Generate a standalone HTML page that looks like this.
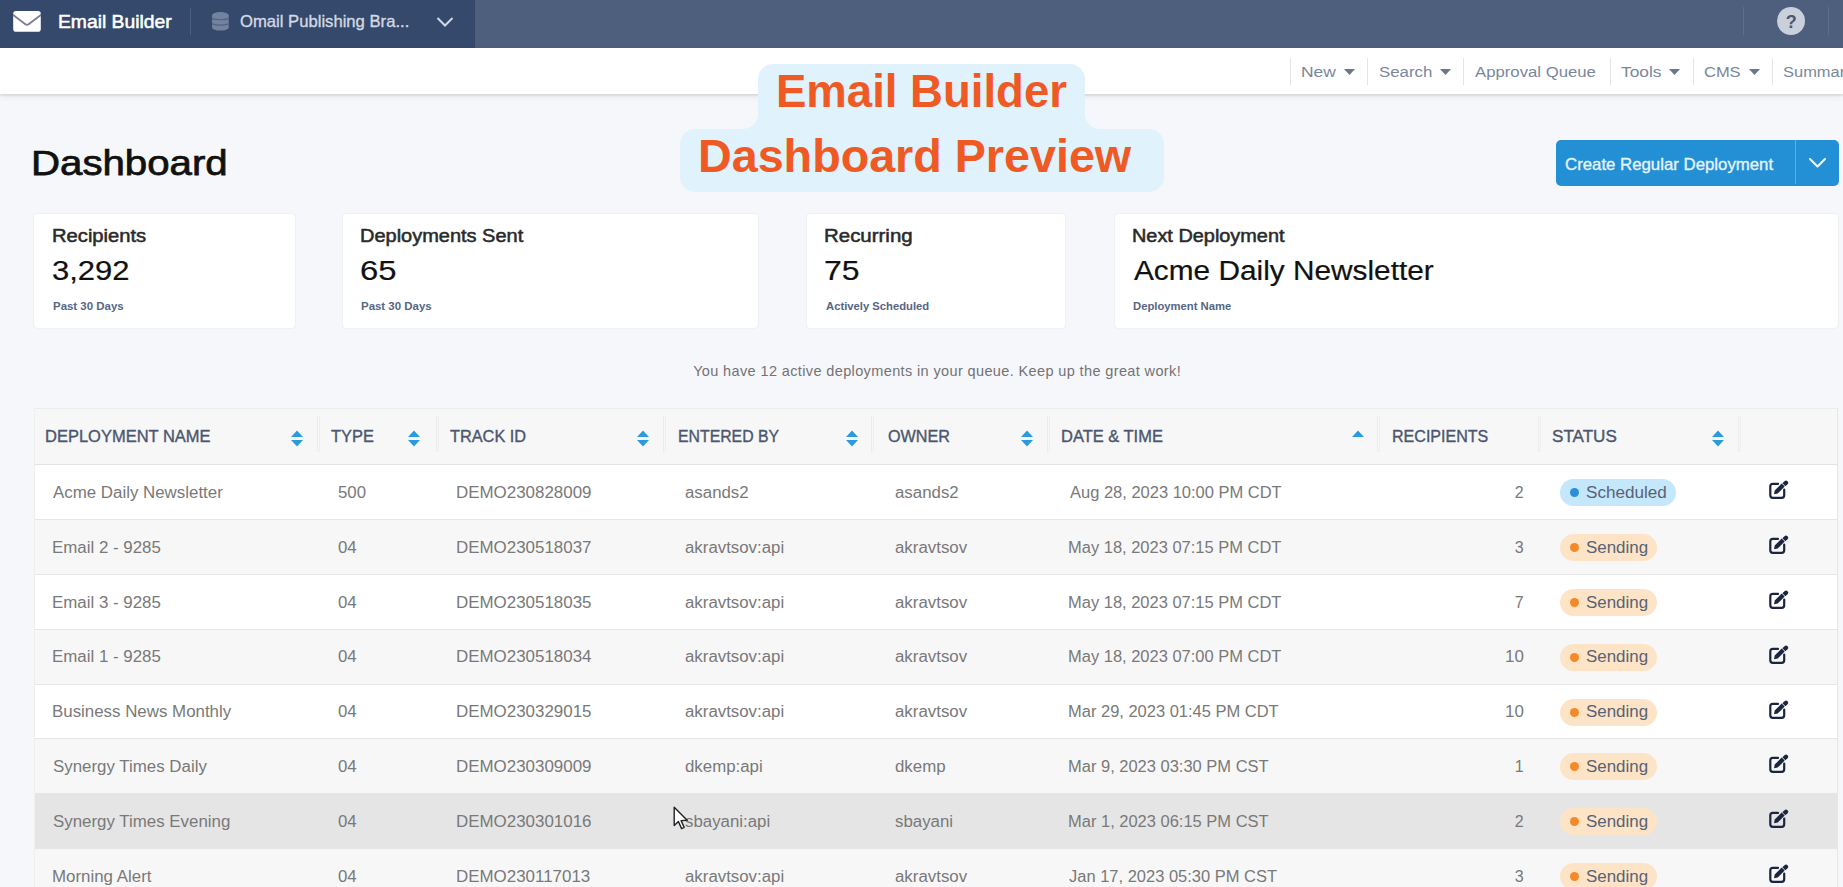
<!DOCTYPE html>
<html><head><meta charset="utf-8"><style>
html,body{margin:0;padding:0;}
body{width:1843px;height:887px;overflow:hidden;position:relative;background:#f6f7fb;font-family:"Liberation Sans",sans-serif;}
.r{position:absolute;}
.t{position:absolute;white-space:nowrap;}
.card{background:#fff;border-radius:3px;box-shadow:0 0 1.5px rgba(0,0,0,0.13);}
</style></head><body>
<div class="r" style="left:0px;top:0px;width:1843px;height:48px;background:#4d5f7c;"></div>
<div class="r" style="left:0px;top:0px;width:475px;height:48px;background:#34496b;"></div>
<svg class="r" style="left:12.5px;top:11px" width="28" height="21" viewBox="0 0 28 21"><rect x="0.2" y="0.1" width="27.6" height="20.6" rx="2.8" fill="#fff"/><path d="M-0.6 3.4 L12.4 13.3 Q14 14.5 15.6 13.3 L28.6 3.4" stroke="#7b7e90" stroke-width="1.9" fill="none" stroke-linejoin="round"/></svg>
<div class="t" style="left:57.96px;top:12.21px;font-size:19px;line-height:19px;color:#ffffff;transform:scaleX(1.0154);transform-origin:0 0;-webkit-text-stroke:0.55px #ffffff;">Email Builder</div>
<div class="r" style="left:190px;top:8px;width:1px;height:27px;background:#4b5f80;"></div>
<svg class="r" style="left:211.5px;top:12px" width="17" height="19" viewBox="0 0 17 19"><g fill="#72839f"><ellipse cx="8.4" cy="3.3" rx="8.3" ry="3.2"/><rect x="0.1" y="3.3" width="16.6" height="12.3"/><ellipse cx="8.4" cy="15.6" rx="8.3" ry="3"/></g><path d="M0 6.6 Q8.4 8.9 16.8 6.6 M0 11.9 Q8.4 14.3 16.8 11.9" stroke="#52627f" stroke-width="1.1" fill="none"/></svg>
<div class="t" style="left:239.75px;top:13.01px;font-size:17px;line-height:17px;color:#d3d9e3;transform:scaleX(0.9789);transform-origin:0 0;-webkit-text-stroke:0.35px #d3d9e3;">Omail Publishing Bra...</div>
<svg class="r" style="left:436px;top:16px" width="18" height="12" viewBox="0 0 18 12"><path d="M1.5 2 L9 9.5 L16.5 2" stroke="#d3d9e3" stroke-width="2" fill="none"/></svg>
<div class="r" style="left:1743px;top:7px;width:1px;height:28px;background:#5d6f8c;"></div>
<div class="r" style="left:1828px;top:7px;width:1px;height:28px;background:#5d6f8c;"></div>
<div class="r" style="left:1777px;top:7px;width:28px;height:28px;border-radius:50%;background:#c9d0dc"></div>
<div class="t" style="left:1785.69px;top:12.96px;font-size:18px;line-height:18px;color:#4b586f;font-weight:700;">?</div>
<div class="r" style="left:0px;top:48px;width:1843px;height:46px;background:#ffffff;box-shadow:0 2px 1.5px rgba(0,0,0,0.07),0 3px 7px rgba(0,0,0,0.06);"></div>
<div class="r" style="left:1290px;top:58px;width:1px;height:27px;background:#e3e5e9;"></div>
<div class="r" style="left:1367px;top:58px;width:1px;height:27px;background:#e3e5e9;"></div>
<div class="r" style="left:1463px;top:58px;width:1px;height:27px;background:#e3e5e9;"></div>
<div class="r" style="left:1610px;top:58px;width:1px;height:27px;background:#e3e5e9;"></div>
<div class="r" style="left:1693px;top:58px;width:1px;height:27px;background:#e3e5e9;"></div>
<div class="r" style="left:1772px;top:58px;width:1px;height:27px;background:#e3e5e9;"></div>
<div class="t" style="left:1300.61px;top:63.88px;font-size:15.5px;line-height:15.5px;color:#7a879b;transform:scaleX(1.1227);transform-origin:0 0;">New</div>
<div class="t" style="left:1378.74px;top:63.88px;font-size:15.5px;line-height:15.5px;color:#7a879b;transform:scaleX(1.0876);transform-origin:0 0;">Search</div>
<div class="t" style="left:1474.92px;top:63.88px;font-size:15.5px;line-height:15.5px;color:#7a879b;transform:scaleX(1.0790);transform-origin:0 0;">Approval Queue</div>
<div class="t" style="left:1621.05px;top:63.88px;font-size:15.5px;line-height:15.5px;color:#7a879b;transform:scaleX(1.1205);transform-origin:0 0;">Tools</div>
<div class="t" style="left:1704.18px;top:63.88px;font-size:15.5px;line-height:15.5px;color:#7a879b;transform:scaleX(1.0626);transform-origin:0 0;">CMS</div>
<div class="t" style="left:1783.26px;top:63.88px;font-size:15.5px;line-height:15.5px;color:#7a879b;transform:scaleX(1.0619);transform-origin:0 0;">Summary</div>
<svg class="r" style="left:1344px;top:69px" width="11" height="6" viewBox="0 0 11 6"><path d="M0 0 H11 L5.5 6Z" fill="#6b778c"/></svg>
<svg class="r" style="left:1439.6px;top:69px" width="11" height="6" viewBox="0 0 11 6"><path d="M0 0 H11 L5.5 6Z" fill="#6b778c"/></svg>
<svg class="r" style="left:1669px;top:69px" width="11" height="6" viewBox="0 0 11 6"><path d="M0 0 H11 L5.5 6Z" fill="#6b778c"/></svg>
<svg class="r" style="left:1748.6px;top:69px" width="11" height="6" viewBox="0 0 11 6"><path d="M0 0 H11 L5.5 6Z" fill="#6b778c"/></svg>
<div class="t" style="left:31.48px;top:146.14px;font-size:35.5px;line-height:35.5px;color:#111111;transform:scaleX(1.1327);transform-origin:0 0;-webkit-text-stroke:0.75px #111111;">Dashboard</div>
<div class="r" style="left:1556px;top:140px;width:283px;height:46px;border-radius:5px;background:#2390d6"></div>
<div class="r" style="left:1795px;top:140px;width:1px;height:44px;background:#56b1ef;"></div>
<div class="t" style="left:1565.16px;top:156.31px;font-size:17px;line-height:17px;color:#e6f3fd;transform:scaleX(0.9877);transform-origin:0 0;-webkit-text-stroke:0.35px #e6f3fd;">Create Regular Deployment</div>
<svg class="r" style="left:1808px;top:157px" width="19" height="12" viewBox="0 0 19 12"><path d="M2 2 L9.5 9.5 L17 2" stroke="#eaf6ff" stroke-width="2.1" stroke-linecap="round" stroke-linejoin="round" fill="none"/></svg>
<div class="r card" style="left:34px;top:214px;width:261px;height:114px"></div>
<div class="t" style="left:51.99px;top:227.98px;font-size:17.5px;line-height:17.5px;color:#2a2a2a;transform:scaleX(1.1529);transform-origin:0 0;-webkit-text-stroke:0.5px #2a2a2a;">Recipients</div>
<div class="t" style="left:52.36px;top:258.24px;font-size:27px;line-height:27px;color:#111111;transform:scaleX(1.1480);transform-origin:0 0;-webkit-text-stroke:0.2px #111111;">3,292</div>
<div class="t" style="left:52.86px;top:301.12px;font-size:11.2px;line-height:11.2px;color:#566685;font-weight:700;transform:scaleX(1.0231);transform-origin:0 0;">Past 30 Days</div>
<div class="r card" style="left:343px;top:214px;width:415px;height:114px"></div>
<div class="t" style="left:360.20px;top:227.98px;font-size:17.5px;line-height:17.5px;color:#2a2a2a;transform:scaleX(1.1414);transform-origin:0 0;-webkit-text-stroke:0.5px #2a2a2a;">Deployments Sent</div>
<div class="t" style="left:360.16px;top:258.24px;font-size:27px;line-height:27px;color:#111111;transform:scaleX(1.2164);transform-origin:0 0;-webkit-text-stroke:0.2px #111111;">65</div>
<div class="t" style="left:361.06px;top:301.12px;font-size:11.2px;line-height:11.2px;color:#566685;font-weight:700;transform:scaleX(1.0231);transform-origin:0 0;">Past 30 Days</div>
<div class="r card" style="left:807px;top:214px;width:258px;height:114px"></div>
<div class="t" style="left:824.16px;top:227.98px;font-size:17.5px;line-height:17.5px;color:#2a2a2a;transform:scaleX(1.1688);transform-origin:0 0;-webkit-text-stroke:0.5px #2a2a2a;">Recurring</div>
<div class="t" style="left:824.20px;top:258.24px;font-size:27px;line-height:27px;color:#111111;transform:scaleX(1.1837);transform-origin:0 0;-webkit-text-stroke:0.2px #111111;">75</div>
<div class="t" style="left:825.52px;top:301.12px;font-size:11.2px;line-height:11.2px;color:#566685;font-weight:700;transform:scaleX(1.0059);transform-origin:0 0;">Actively Scheduled</div>
<div class="r card" style="left:1115px;top:214px;width:723px;height:114px"></div>
<div class="t" style="left:1132.21px;top:227.98px;font-size:17.5px;line-height:17.5px;color:#2a2a2a;transform:scaleX(1.1361);transform-origin:0 0;-webkit-text-stroke:0.5px #2a2a2a;">Next Deployment</div>
<div class="t" style="left:1133.65px;top:258.24px;font-size:27px;line-height:27px;color:#111111;transform:scaleX(1.1035);transform-origin:0 0;-webkit-text-stroke:0.2px #111111;">Acme Daily Newsletter</div>
<div class="t" style="left:1133.07px;top:301.12px;font-size:11.2px;line-height:11.2px;color:#566685;font-weight:700;transform:scaleX(1.0072);transform-origin:0 0;">Deployment Name</div>
<div class="t" style="left:693.14px;top:363.92px;font-size:14.5px;line-height:14.5px;color:#737373;letter-spacing:0.374px;">You have 12 active deployments in your queue. Keep up the great work!</div>
<div class="r" style="left:34px;top:408px;width:1804px;height:56px;background:#f7f7f7;border-top:1px solid #ececec;box-sizing:border-box"></div>
<div class="r" style="left:34px;top:464px;width:1804px;height:1px;background:#e3e3e3;"></div>
<div class="t" style="left:44.98px;top:429.25px;font-size:16px;line-height:16px;color:#4a5670;transform:scaleX(1.0306);transform-origin:0 0;-webkit-text-stroke:0.35px #4a5670;">DEPLOYMENT NAME</div>
<div class="t" style="left:331.17px;top:429.25px;font-size:16px;line-height:16px;color:#4a5670;transform:scaleX(1.0245);transform-origin:0 0;-webkit-text-stroke:0.35px #4a5670;">TYPE</div>
<div class="t" style="left:450.47px;top:429.25px;font-size:16px;line-height:16px;color:#4a5670;transform:scaleX(1.0190);transform-origin:0 0;-webkit-text-stroke:0.35px #4a5670;">TRACK ID</div>
<div class="t" style="left:678.23px;top:429.25px;font-size:16px;line-height:16px;color:#4a5670;transform:scaleX(0.9887);transform-origin:0 0;-webkit-text-stroke:0.35px #4a5670;">ENTERED BY</div>
<div class="t" style="left:887.67px;top:429.25px;font-size:16px;line-height:16px;color:#4a5670;transform:scaleX(1.0110);transform-origin:0 0;-webkit-text-stroke:0.35px #4a5670;">OWNER</div>
<div class="t" style="left:1061.08px;top:429.25px;font-size:16px;line-height:16px;color:#4a5670;transform:scaleX(1.0295);transform-origin:0 0;-webkit-text-stroke:0.35px #4a5670;">DATE &amp; TIME</div>
<div class="t" style="left:1392.42px;top:429.25px;font-size:16px;line-height:16px;color:#4a5670;transform:scaleX(1.0032);transform-origin:0 0;-webkit-text-stroke:0.35px #4a5670;">RECIPIENTS</div>
<div class="t" style="left:1552.03px;top:429.25px;font-size:16px;line-height:16px;color:#4a5670;transform:scaleX(1.0661);transform-origin:0 0;-webkit-text-stroke:0.35px #4a5670;">STATUS</div>
<div class="r" style="left:317px;top:416px;width:1px;height:36px;background:#ececec;"></div>
<div class="r" style="left:319px;top:416px;width:1px;height:36px;background:#efefef;"></div>
<div class="r" style="left:436px;top:416px;width:1px;height:36px;background:#ececec;"></div>
<div class="r" style="left:438px;top:416px;width:1px;height:36px;background:#efefef;"></div>
<div class="r" style="left:663px;top:416px;width:1px;height:36px;background:#ececec;"></div>
<div class="r" style="left:665px;top:416px;width:1px;height:36px;background:#efefef;"></div>
<div class="r" style="left:871px;top:416px;width:1px;height:36px;background:#ececec;"></div>
<div class="r" style="left:873px;top:416px;width:1px;height:36px;background:#efefef;"></div>
<div class="r" style="left:1047px;top:416px;width:1px;height:36px;background:#ececec;"></div>
<div class="r" style="left:1049px;top:416px;width:1px;height:36px;background:#efefef;"></div>
<div class="r" style="left:1377px;top:416px;width:1px;height:36px;background:#ececec;"></div>
<div class="r" style="left:1379px;top:416px;width:1px;height:36px;background:#efefef;"></div>
<div class="r" style="left:1538px;top:416px;width:1px;height:36px;background:#ececec;"></div>
<div class="r" style="left:1540px;top:416px;width:1px;height:36px;background:#efefef;"></div>
<div class="r" style="left:1738px;top:416px;width:1px;height:36px;background:#ececec;"></div>
<div class="r" style="left:1740px;top:416px;width:1px;height:36px;background:#efefef;"></div>
<svg class="r" style="left:290.5px;top:430px" width="12" height="17" viewBox="0 0 12 17"><path d="M0 7 L6 0.5 L12 7Z" fill="#2b9be0"/><path d="M0 10 L6 16.5 L12 10Z" fill="#2b9be0"/></svg>
<svg class="r" style="left:408px;top:430px" width="12" height="17" viewBox="0 0 12 17"><path d="M0 7 L6 0.5 L12 7Z" fill="#2b9be0"/><path d="M0 10 L6 16.5 L12 10Z" fill="#2b9be0"/></svg>
<svg class="r" style="left:636.5px;top:430px" width="12" height="17" viewBox="0 0 12 17"><path d="M0 7 L6 0.5 L12 7Z" fill="#2b9be0"/><path d="M0 10 L6 16.5 L12 10Z" fill="#2b9be0"/></svg>
<svg class="r" style="left:846px;top:430px" width="12" height="17" viewBox="0 0 12 17"><path d="M0 7 L6 0.5 L12 7Z" fill="#2b9be0"/><path d="M0 10 L6 16.5 L12 10Z" fill="#2b9be0"/></svg>
<svg class="r" style="left:1021px;top:430px" width="12" height="17" viewBox="0 0 12 17"><path d="M0 7 L6 0.5 L12 7Z" fill="#2b9be0"/><path d="M0 10 L6 16.5 L12 10Z" fill="#2b9be0"/></svg>
<svg class="r" style="left:1712px;top:430px" width="12" height="17" viewBox="0 0 12 17"><path d="M0 7 L6 0.5 L12 7Z" fill="#2b9be0"/><path d="M0 10 L6 16.5 L12 10Z" fill="#2b9be0"/></svg>
<svg class="r" style="left:1352px;top:430px" width="12" height="17" viewBox="0 0 12 17"><path d="M0 7 L6 0.5 L12 7Z" fill="#2b9be0"/></svg>
<div class="r" style="left:34px;top:465px;width:1804px;height:54px;background:#ffffff;"></div>
<div class="r" style="left:34px;top:519px;width:1804px;height:1px;background:#e6e6e6;"></div>
<div class="t" style="left:53.32px;top:484.85px;font-size:16px;line-height:16px;color:#797979;transform:scaleX(1.0550);transform-origin:0 0;">Acme Daily Newsletter</div>
<div class="t" style="left:338.03px;top:484.85px;font-size:16px;line-height:16px;color:#797979;transform:scaleX(1.0500);transform-origin:0 0;">500</div>
<div class="t" style="left:455.55px;top:484.85px;font-size:16px;line-height:16px;color:#797979;transform:scaleX(1.0580);transform-origin:0 0;">DEMO230828009</div>
<div class="t" style="left:685.04px;top:484.85px;font-size:16px;line-height:16px;color:#797979;transform:scaleX(1.0520);transform-origin:0 0;">asands2</div>
<div class="t" style="left:894.74px;top:484.85px;font-size:16px;line-height:16px;color:#797979;transform:scaleX(1.0530);transform-origin:0 0;">asands2</div>
<div class="t" style="left:1069.52px;top:484.85px;font-size:16px;line-height:16px;color:#797979;transform:scaleX(1.0300);transform-origin:0 0;">Aug 28, 2023 10:00 PM CDT</div>
<div class="t" style="left:1514.72px;top:484.85px;font-size:16px;line-height:16px;color:#797979;">2</div>
<div class="r" style="left:1560px;top:479px;width:116px;height:27px;border-radius:14px;background:#c5e7fb"></div>
<div class="r" style="left:1569.5px;top:487.5px;width:9px;height:9px;border-radius:50%;background:#2a8fd8"></div>
<div class="t" style="left:1585.73px;top:484.85px;font-size:16px;line-height:16px;color:#586275;transform:scaleX(1.0672);transform-origin:0 0;">Scheduled</div>
<svg class="r" style="left:1768px;top:480.0px" width="21" height="20" viewBox="0 0 21 20"><path d="M10 3.9 H4.8 A2.5 2.5 0 0 0 2.3 6.4 V15.3 A2.5 2.5 0 0 0 4.8 17.8 H13.7 A2.5 2.5 0 0 0 16.2 15.3 V9.5" stroke="#1b2540" stroke-width="2.2" fill="none" stroke-linecap="round"/><path d="M6 14.3 L6.7 10.6 L13.7 3.6 L16.7 6.6 L9.7 13.6 Z" fill="#1b2540"/><path d="M14.4 3.3 L16.5 1.2 A2.1 2.1 0 0 1 19.5 4.2 L17.4 6.3 Z" fill="#1b2540"/></svg>
<div class="r" style="left:34px;top:520px;width:1804px;height:54px;background:#f7f7f7;"></div>
<div class="r" style="left:34px;top:574px;width:1804px;height:1px;background:#e6e6e6;"></div>
<div class="t" style="left:52.05px;top:539.73px;font-size:16px;line-height:16px;color:#797979;transform:scaleX(1.0550);transform-origin:0 0;">Email 2 - 9285</div>
<div class="t" style="left:338.03px;top:539.73px;font-size:16px;line-height:16px;color:#797979;transform:scaleX(1.0500);transform-origin:0 0;">04</div>
<div class="t" style="left:455.55px;top:539.73px;font-size:16px;line-height:16px;color:#797979;transform:scaleX(1.0580);transform-origin:0 0;">DEMO230518037</div>
<div class="t" style="left:685.04px;top:539.73px;font-size:16px;line-height:16px;color:#797979;transform:scaleX(1.0520);transform-origin:0 0;">akravtsov:api</div>
<div class="t" style="left:894.74px;top:539.73px;font-size:16px;line-height:16px;color:#797979;transform:scaleX(1.0530);transform-origin:0 0;">akravtsov</div>
<div class="t" style="left:1068.28px;top:539.73px;font-size:16px;line-height:16px;color:#797979;transform:scaleX(1.0300);transform-origin:0 0;">May 18, 2023 07:15 PM CDT</div>
<div class="t" style="left:1514.64px;top:539.73px;font-size:16px;line-height:16px;color:#797979;">3</div>
<div class="r" style="left:1560px;top:534px;width:97px;height:27px;border-radius:14px;background:#fde4c6"></div>
<div class="r" style="left:1569.5px;top:542.5px;width:9px;height:9px;border-radius:50%;background:#f5892a"></div>
<div class="t" style="left:1585.74px;top:539.73px;font-size:16px;line-height:16px;color:#586275;transform:scaleX(1.0580);transform-origin:0 0;">Sending</div>
<svg class="r" style="left:1768px;top:534.9px" width="21" height="20" viewBox="0 0 21 20"><path d="M10 3.9 H4.8 A2.5 2.5 0 0 0 2.3 6.4 V15.3 A2.5 2.5 0 0 0 4.8 17.8 H13.7 A2.5 2.5 0 0 0 16.2 15.3 V9.5" stroke="#1b2540" stroke-width="2.2" fill="none" stroke-linecap="round"/><path d="M6 14.3 L6.7 10.6 L13.7 3.6 L16.7 6.6 L9.7 13.6 Z" fill="#1b2540"/><path d="M14.4 3.3 L16.5 1.2 A2.1 2.1 0 0 1 19.5 4.2 L17.4 6.3 Z" fill="#1b2540"/></svg>
<div class="r" style="left:34px;top:575px;width:1804px;height:54px;background:#ffffff;"></div>
<div class="r" style="left:34px;top:629px;width:1804px;height:1px;background:#e6e6e6;"></div>
<div class="t" style="left:52.05px;top:594.61px;font-size:16px;line-height:16px;color:#797979;transform:scaleX(1.0550);transform-origin:0 0;">Email 3 - 9285</div>
<div class="t" style="left:338.03px;top:594.61px;font-size:16px;line-height:16px;color:#797979;transform:scaleX(1.0500);transform-origin:0 0;">04</div>
<div class="t" style="left:455.55px;top:594.61px;font-size:16px;line-height:16px;color:#797979;transform:scaleX(1.0580);transform-origin:0 0;">DEMO230518035</div>
<div class="t" style="left:685.04px;top:594.61px;font-size:16px;line-height:16px;color:#797979;transform:scaleX(1.0520);transform-origin:0 0;">akravtsov:api</div>
<div class="t" style="left:894.74px;top:594.61px;font-size:16px;line-height:16px;color:#797979;transform:scaleX(1.0530);transform-origin:0 0;">akravtsov</div>
<div class="t" style="left:1068.28px;top:594.61px;font-size:16px;line-height:16px;color:#797979;transform:scaleX(1.0300);transform-origin:0 0;">May 18, 2023 07:15 PM CDT</div>
<div class="t" style="left:1514.72px;top:594.61px;font-size:16px;line-height:16px;color:#797979;">7</div>
<div class="r" style="left:1560px;top:589px;width:97px;height:27px;border-radius:14px;background:#fde4c6"></div>
<div class="r" style="left:1569.5px;top:597.5px;width:9px;height:9px;border-radius:50%;background:#f5892a"></div>
<div class="t" style="left:1585.74px;top:594.61px;font-size:16px;line-height:16px;color:#586275;transform:scaleX(1.0580);transform-origin:0 0;">Sending</div>
<svg class="r" style="left:1768px;top:589.8px" width="21" height="20" viewBox="0 0 21 20"><path d="M10 3.9 H4.8 A2.5 2.5 0 0 0 2.3 6.4 V15.3 A2.5 2.5 0 0 0 4.8 17.8 H13.7 A2.5 2.5 0 0 0 16.2 15.3 V9.5" stroke="#1b2540" stroke-width="2.2" fill="none" stroke-linecap="round"/><path d="M6 14.3 L6.7 10.6 L13.7 3.6 L16.7 6.6 L9.7 13.6 Z" fill="#1b2540"/><path d="M14.4 3.3 L16.5 1.2 A2.1 2.1 0 0 1 19.5 4.2 L17.4 6.3 Z" fill="#1b2540"/></svg>
<div class="r" style="left:34px;top:630px;width:1804px;height:54px;background:#f7f7f7;"></div>
<div class="r" style="left:34px;top:684px;width:1804px;height:1px;background:#e6e6e6;"></div>
<div class="t" style="left:52.05px;top:649.49px;font-size:16px;line-height:16px;color:#797979;transform:scaleX(1.0550);transform-origin:0 0;">Email 1 - 9285</div>
<div class="t" style="left:338.03px;top:649.49px;font-size:16px;line-height:16px;color:#797979;transform:scaleX(1.0500);transform-origin:0 0;">04</div>
<div class="t" style="left:455.55px;top:649.49px;font-size:16px;line-height:16px;color:#797979;transform:scaleX(1.0580);transform-origin:0 0;">DEMO230518034</div>
<div class="t" style="left:685.04px;top:649.49px;font-size:16px;line-height:16px;color:#797979;transform:scaleX(1.0520);transform-origin:0 0;">akravtsov:api</div>
<div class="t" style="left:894.74px;top:649.49px;font-size:16px;line-height:16px;color:#797979;transform:scaleX(1.0530);transform-origin:0 0;">akravtsov</div>
<div class="t" style="left:1068.28px;top:649.49px;font-size:16px;line-height:16px;color:#797979;transform:scaleX(1.0300);transform-origin:0 0;">May 18, 2023 07:00 PM CDT</div>
<div class="t" style="left:1504.69px;top:649.49px;font-size:16px;line-height:16px;color:#797979;transform:scaleX(1.0580);transform-origin:0 0;">10</div>
<div class="r" style="left:1560px;top:644px;width:97px;height:27px;border-radius:14px;background:#fde4c6"></div>
<div class="r" style="left:1569.5px;top:652.5px;width:9px;height:9px;border-radius:50%;background:#f5892a"></div>
<div class="t" style="left:1585.74px;top:649.49px;font-size:16px;line-height:16px;color:#586275;transform:scaleX(1.0580);transform-origin:0 0;">Sending</div>
<svg class="r" style="left:1768px;top:644.6px" width="21" height="20" viewBox="0 0 21 20"><path d="M10 3.9 H4.8 A2.5 2.5 0 0 0 2.3 6.4 V15.3 A2.5 2.5 0 0 0 4.8 17.8 H13.7 A2.5 2.5 0 0 0 16.2 15.3 V9.5" stroke="#1b2540" stroke-width="2.2" fill="none" stroke-linecap="round"/><path d="M6 14.3 L6.7 10.6 L13.7 3.6 L16.7 6.6 L9.7 13.6 Z" fill="#1b2540"/><path d="M14.4 3.3 L16.5 1.2 A2.1 2.1 0 0 1 19.5 4.2 L17.4 6.3 Z" fill="#1b2540"/></svg>
<div class="r" style="left:34px;top:685px;width:1804px;height:53px;background:#ffffff;"></div>
<div class="r" style="left:34px;top:738px;width:1804px;height:1px;background:#e6e6e6;"></div>
<div class="t" style="left:52.05px;top:704.37px;font-size:16px;line-height:16px;color:#797979;transform:scaleX(1.0550);transform-origin:0 0;">Business News Monthly</div>
<div class="t" style="left:338.03px;top:704.37px;font-size:16px;line-height:16px;color:#797979;transform:scaleX(1.0500);transform-origin:0 0;">04</div>
<div class="t" style="left:455.55px;top:704.37px;font-size:16px;line-height:16px;color:#797979;transform:scaleX(1.0580);transform-origin:0 0;">DEMO230329015</div>
<div class="t" style="left:685.04px;top:704.37px;font-size:16px;line-height:16px;color:#797979;transform:scaleX(1.0520);transform-origin:0 0;">akravtsov:api</div>
<div class="t" style="left:894.74px;top:704.37px;font-size:16px;line-height:16px;color:#797979;transform:scaleX(1.0530);transform-origin:0 0;">akravtsov</div>
<div class="t" style="left:1068.28px;top:704.37px;font-size:16px;line-height:16px;color:#797979;transform:scaleX(1.0300);transform-origin:0 0;">Mar 29, 2023 01:45 PM CDT</div>
<div class="t" style="left:1504.69px;top:704.37px;font-size:16px;line-height:16px;color:#797979;transform:scaleX(1.0580);transform-origin:0 0;">10</div>
<div class="r" style="left:1560px;top:699px;width:97px;height:27px;border-radius:14px;background:#fde4c6"></div>
<div class="r" style="left:1569.5px;top:707.5px;width:9px;height:9px;border-radius:50%;background:#f5892a"></div>
<div class="t" style="left:1585.74px;top:704.37px;font-size:16px;line-height:16px;color:#586275;transform:scaleX(1.0580);transform-origin:0 0;">Sending</div>
<svg class="r" style="left:1768px;top:699.5px" width="21" height="20" viewBox="0 0 21 20"><path d="M10 3.9 H4.8 A2.5 2.5 0 0 0 2.3 6.4 V15.3 A2.5 2.5 0 0 0 4.8 17.8 H13.7 A2.5 2.5 0 0 0 16.2 15.3 V9.5" stroke="#1b2540" stroke-width="2.2" fill="none" stroke-linecap="round"/><path d="M6 14.3 L6.7 10.6 L13.7 3.6 L16.7 6.6 L9.7 13.6 Z" fill="#1b2540"/><path d="M14.4 3.3 L16.5 1.2 A2.1 2.1 0 0 1 19.5 4.2 L17.4 6.3 Z" fill="#1b2540"/></svg>
<div class="r" style="left:34px;top:739px;width:1804px;height:54px;background:#f7f7f7;"></div>
<div class="r" style="left:34px;top:793px;width:1804px;height:1px;background:#e5e5e5;"></div>
<div class="t" style="left:52.64px;top:759.25px;font-size:16px;line-height:16px;color:#797979;transform:scaleX(1.0550);transform-origin:0 0;">Synergy Times Daily</div>
<div class="t" style="left:338.03px;top:759.25px;font-size:16px;line-height:16px;color:#797979;transform:scaleX(1.0500);transform-origin:0 0;">04</div>
<div class="t" style="left:455.55px;top:759.25px;font-size:16px;line-height:16px;color:#797979;transform:scaleX(1.0580);transform-origin:0 0;">DEMO230309009</div>
<div class="t" style="left:685.13px;top:759.25px;font-size:16px;line-height:16px;color:#797979;transform:scaleX(1.0520);transform-origin:0 0;">dkemp:api</div>
<div class="t" style="left:894.83px;top:759.25px;font-size:16px;line-height:16px;color:#797979;transform:scaleX(1.0530);transform-origin:0 0;">dkemp</div>
<div class="t" style="left:1068.28px;top:759.25px;font-size:16px;line-height:16px;color:#797979;transform:scaleX(1.0300);transform-origin:0 0;">Mar 9, 2023 03:30 PM CST</div>
<div class="t" style="left:1514.72px;top:759.25px;font-size:16px;line-height:16px;color:#797979;">1</div>
<div class="r" style="left:1560px;top:753px;width:97px;height:27px;border-radius:14px;background:#fde4c6"></div>
<div class="r" style="left:1569.5px;top:761.5px;width:9px;height:9px;border-radius:50%;background:#f5892a"></div>
<div class="t" style="left:1585.74px;top:759.25px;font-size:16px;line-height:16px;color:#586275;transform:scaleX(1.0580);transform-origin:0 0;">Sending</div>
<svg class="r" style="left:1768px;top:754.4px" width="21" height="20" viewBox="0 0 21 20"><path d="M10 3.9 H4.8 A2.5 2.5 0 0 0 2.3 6.4 V15.3 A2.5 2.5 0 0 0 4.8 17.8 H13.7 A2.5 2.5 0 0 0 16.2 15.3 V9.5" stroke="#1b2540" stroke-width="2.2" fill="none" stroke-linecap="round"/><path d="M6 14.3 L6.7 10.6 L13.7 3.6 L16.7 6.6 L9.7 13.6 Z" fill="#1b2540"/><path d="M14.4 3.3 L16.5 1.2 A2.1 2.1 0 0 1 19.5 4.2 L17.4 6.3 Z" fill="#1b2540"/></svg>
<div class="r" style="left:34px;top:794px;width:1804px;height:54px;background:#e5e5e5;"></div>
<div class="r" style="left:34px;top:848px;width:1804px;height:1px;background:#e6e6e6;"></div>
<div class="t" style="left:52.64px;top:814.13px;font-size:16px;line-height:16px;color:#797979;transform:scaleX(1.0550);transform-origin:0 0;">Synergy Times Evening</div>
<div class="t" style="left:338.03px;top:814.13px;font-size:16px;line-height:16px;color:#797979;transform:scaleX(1.0500);transform-origin:0 0;">04</div>
<div class="t" style="left:455.55px;top:814.13px;font-size:16px;line-height:16px;color:#797979;transform:scaleX(1.0580);transform-origin:0 0;">DEMO230301016</div>
<div class="t" style="left:685.30px;top:814.13px;font-size:16px;line-height:16px;color:#797979;transform:scaleX(1.0520);transform-origin:0 0;">sbayani:api</div>
<div class="t" style="left:894.99px;top:814.13px;font-size:16px;line-height:16px;color:#797979;transform:scaleX(1.0530);transform-origin:0 0;">sbayani</div>
<div class="t" style="left:1068.28px;top:814.13px;font-size:16px;line-height:16px;color:#797979;transform:scaleX(1.0300);transform-origin:0 0;">Mar 1, 2023 06:15 PM CST</div>
<div class="t" style="left:1514.72px;top:814.13px;font-size:16px;line-height:16px;color:#797979;">2</div>
<div class="r" style="left:1560px;top:808px;width:97px;height:27px;border-radius:14px;background:#fde4c6"></div>
<div class="r" style="left:1569.5px;top:816.5px;width:9px;height:9px;border-radius:50%;background:#f5892a"></div>
<div class="t" style="left:1585.74px;top:814.13px;font-size:16px;line-height:16px;color:#586275;transform:scaleX(1.0580);transform-origin:0 0;">Sending</div>
<svg class="r" style="left:1768px;top:809.3px" width="21" height="20" viewBox="0 0 21 20"><path d="M10 3.9 H4.8 A2.5 2.5 0 0 0 2.3 6.4 V15.3 A2.5 2.5 0 0 0 4.8 17.8 H13.7 A2.5 2.5 0 0 0 16.2 15.3 V9.5" stroke="#1b2540" stroke-width="2.2" fill="none" stroke-linecap="round"/><path d="M6 14.3 L6.7 10.6 L13.7 3.6 L16.7 6.6 L9.7 13.6 Z" fill="#1b2540"/><path d="M14.4 3.3 L16.5 1.2 A2.1 2.1 0 0 1 19.5 4.2 L17.4 6.3 Z" fill="#1b2540"/></svg>
<div class="r" style="left:34px;top:849px;width:1804px;height:54px;background:#f7f7f7;"></div>
<div class="r" style="left:34px;top:903px;width:1804px;height:1px;background:#e6e6e6;"></div>
<div class="t" style="left:52.05px;top:869.01px;font-size:16px;line-height:16px;color:#797979;transform:scaleX(1.0550);transform-origin:0 0;">Morning Alert</div>
<div class="t" style="left:338.03px;top:869.01px;font-size:16px;line-height:16px;color:#797979;transform:scaleX(1.0500);transform-origin:0 0;">04</div>
<div class="t" style="left:455.55px;top:869.01px;font-size:16px;line-height:16px;color:#797979;transform:scaleX(1.0580);transform-origin:0 0;">DEMO230117013</div>
<div class="t" style="left:685.04px;top:869.01px;font-size:16px;line-height:16px;color:#797979;transform:scaleX(1.0520);transform-origin:0 0;">akravtsov:api</div>
<div class="t" style="left:894.74px;top:869.01px;font-size:16px;line-height:16px;color:#797979;transform:scaleX(1.0530);transform-origin:0 0;">akravtsov</div>
<div class="t" style="left:1069.35px;top:869.01px;font-size:16px;line-height:16px;color:#797979;transform:scaleX(1.0300);transform-origin:0 0;">Jan 17, 2023 05:30 PM CST</div>
<div class="t" style="left:1514.64px;top:869.01px;font-size:16px;line-height:16px;color:#797979;">3</div>
<div class="r" style="left:1560px;top:863px;width:97px;height:27px;border-radius:14px;background:#fde4c6"></div>
<div class="r" style="left:1569.5px;top:871.5px;width:9px;height:9px;border-radius:50%;background:#f5892a"></div>
<div class="t" style="left:1585.74px;top:869.01px;font-size:16px;line-height:16px;color:#586275;transform:scaleX(1.0580);transform-origin:0 0;">Sending</div>
<svg class="r" style="left:1768px;top:864.2px" width="21" height="20" viewBox="0 0 21 20"><path d="M10 3.9 H4.8 A2.5 2.5 0 0 0 2.3 6.4 V15.3 A2.5 2.5 0 0 0 4.8 17.8 H13.7 A2.5 2.5 0 0 0 16.2 15.3 V9.5" stroke="#1b2540" stroke-width="2.2" fill="none" stroke-linecap="round"/><path d="M6 14.3 L6.7 10.6 L13.7 3.6 L16.7 6.6 L9.7 13.6 Z" fill="#1b2540"/><path d="M14.4 3.3 L16.5 1.2 A2.1 2.1 0 0 1 19.5 4.2 L17.4 6.3 Z" fill="#1b2540"/></svg>
<div class="r" style="left:34px;top:408px;width:1px;height:479px;background:#efefef;"></div>
<div class="r" style="left:1837px;top:408px;width:1px;height:479px;background:#e6e6e6;"></div>
<svg class="r" style="left:673px;top:806px" width="16" height="24" viewBox="0 0 16 24"><path d="M1.2 1.2 V19.5 L5.4 15.6 L8.6 22.6 L11.2 21.4 L8.1 14.6 L14.2 14.2Z" fill="#fff" stroke="#222" stroke-width="1.4" stroke-linejoin="round"/></svg>
<svg class="r" style="left:679px;top:63px" width="486" height="131" viewBox="0 0 486 131"><path d="M79 16 A15 15 0 0 1 94 1 H391 A15 15 0 0 1 406 16 V51 A15 15 0 0 0 421 66 H470 A15 15 0 0 1 485 81 V114 A15 15 0 0 1 470 129 H16 A15 15 0 0 1 1 114 V81 A15 15 0 0 1 16 66 H64 A15 15 0 0 0 79 51 Z" fill="#e0f2fc"/></svg>
<div class="t" style="left:776.04px;top:67.21px;font-size:47px;line-height:47px;color:#ef5a24;font-weight:700;transform:scaleX(0.9687);transform-origin:0 0;">Email Builder</div>
<div class="t" style="left:697.97px;top:132.21px;font-size:47px;line-height:47px;color:#ef5a24;font-weight:700;transform:scaleX(0.9930);transform-origin:0 0;">Dashboard Preview</div>
</body></html>
